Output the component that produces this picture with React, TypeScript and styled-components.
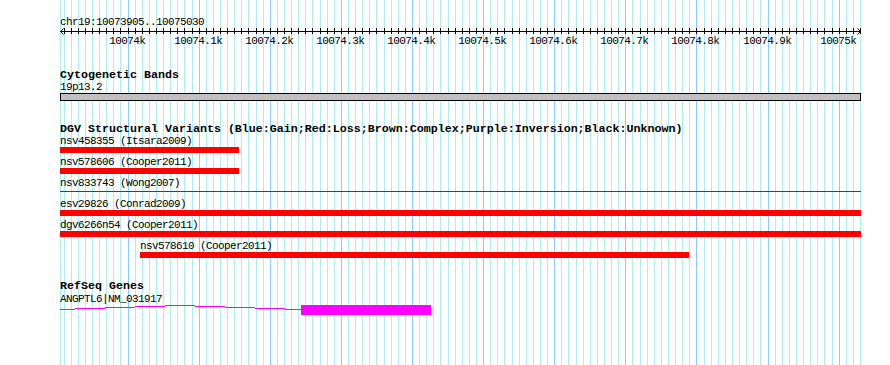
import React from "react";
import styled, { createGlobalStyle } from "styled-components";

const START = 10073905;
const END = 10075030;
const LEFT = 60;
const TRACK_W = 800;
const SCALE = TRACK_W / (END - START);
const W = 890;
const H = 365;
const FONT = '"Liberation Mono", "DejaVu Sans Mono", monospace';

const px = (bp: number) => LEFT + (bp - START) * SCALE;
const clampX = (bp: number) => Math.max(LEFT, Math.min(LEFT + TRACK_W + 1, Math.round(px(bp))));

const GlobalStyle = createGlobalStyle`
  html, body { margin: 0; padding: 0; background: #ffffff; }
  #root { width: ${W}px; height: ${H}px; }
`;

const Panel = styled.div`
  position: relative;
  width: ${W}px;
  height: ${H}px;
  overflow: hidden;
  background: #ffffff;
  font-family: ${FONT};
  color: #000000;
`;

const GridLayer = styled.svg`
  position: absolute;
  left: 0;
  top: 0;
  z-index: 0;
  display: block;
`;

const Content = styled.div`
  position: relative;
  z-index: 1;
  display: flex;
  flex-direction: column;
`;

const SmallText = styled.div`
  font-size: 11px;
  letter-spacing: -0.6px;
  line-height: 12px;
  height: 12px;
  white-space: nowrap;
`;

const RefLabel = styled(SmallText)`
  margin: 16px 0 0 ${LEFT}px;
`;

const RulerSvg = styled.svg`
  display: block;
  width: ${W}px;
  height: 20px;
`;

const Track = styled.section<{ $gap: number }>`
  display: flex;
  flex-direction: column;
  margin-top: ${(p) => p.$gap}px;
`;

const TrackTitle = styled.div`
  padding-left: ${LEFT}px;
  font-weight: bold;
  font-size: 11.67px;
  line-height: 11px;
  height: 11px;
  white-space: nowrap;
`;

const FeatureRow = styled.div`
  display: flex;
  flex-direction: column;
  margin-bottom: 3px;
`;

const FeatureLabel = styled(SmallText)``;

const Bar = styled.div<{ $thin?: boolean; $color: string }>`
  background: ${(p) => p.$color};
  height: ${(p) => (p.$thin ? 1 : 6)}px;
  margin: ${(p) => (p.$thin ? "2px 0 3px" : "0")};
`;

const TrackLabel = styled(SmallText)<{ $top?: number }>`
  padding-left: ${LEFT}px;
  margin-top: ${(p) => p.$top ?? 0}px;
`;

const Band = styled.div`
  box-sizing: border-box;
  margin-left: ${LEFT}px;
  width: ${TRACK_W + 1}px;
  height: 8px;
  border: 1px solid #000000;
  background: #c0c0c0;
`;

const GeneSvg = styled.svg`
  display: block;
  width: ${W}px;
  height: 10px;
`;

type Variant = { name: string; src: string; start: number; end: number; thin?: boolean };

const variants: Variant[] = [
  { name: "nsv458355", src: "Itsara2009", start: 10073800, end: 10074157 },
  { name: "nsv578606", src: "Cooper2011", start: 10073800, end: 10074157 },
  { name: "nsv833743", src: "Wong2007", start: 10073700, end: 10075200, thin: true },
  { name: "esv29826", src: "Conrad2009", start: 10073500, end: 10075400 },
  { name: "dgv6266n54", src: "Cooper2011", start: 10073600, end: 10075300 },
  { name: "nsv578610", src: "Cooper2011", start: 10074018, end: 10074790 },
];

const gridBps: number[] = [];
for (let bp = 10073910; bp <= END; bp += 10) gridBps.push(bp);

const majorLabel = (bp: number) => {
  const k = bp / 1000;
  const s = Number.isInteger(k) ? String(k) : k.toFixed(1);
  return `${s}k`;
};

function Grid() {
  const gw = LEFT + TRACK_W + 1;
  return (
    <GridLayer width={gw} height={H} viewBox={`0 0 ${gw} ${H}`} shapeRendering="crispEdges">
      <line x1={LEFT + 0.5} y1={0} x2={LEFT + 0.5} y2={H} stroke="#afeeee" />
      {gridBps.map((bp) => {
        const x = Math.round(px(bp)) + 0.5;
        const major = bp % 100 === 0;
        return (
          <line key={bp} x1={x} y1={0} x2={x} y2={H} stroke={major ? "#87cefa" : "#afeeee"} />
        );
      })}
    </GridLayer>
  );
}

function Ruler() {
  const right = LEFT + TRACK_W;
  return (
    <RulerSvg viewBox={`0 0 ${W} 20`}>
      <g shapeRendering="crispEdges" stroke="#000">
        <line x1={LEFT} y1={3.5} x2={right + 1} y2={3.5} />
        {gridBps.map((bp) => {
          const x = Math.round(px(bp)) + 0.5;
          return <line key={bp} x1={x} y1={0} x2={x} y2={6} />;
        })}
      </g>
      <g stroke="#000" fill="none">
        <polyline points={`${LEFT + 3.5},0.5 ${LEFT + 0.5},3.5 ${LEFT + 3.5},6.5`} />
        <polyline points={`${right - 2.5},0.5 ${right + 0.5},3.5 ${right - 2.5},6.5`} />
      </g>
      {gridBps
        .filter((bp) => bp % 100 === 0)
        .map((bp) => (
          <text
            key={bp}
            x={Math.round(px(bp)) - 0.7}
            y={16}
            textAnchor="middle"
            fontSize={11}
            letterSpacing={-0.6}
            fontFamily={FONT}
            fill="#000"
          >
            {majorLabel(bp)}
          </text>
        ))}
    </RulerSvg>
  );
}

function Gene() {
  const exonStart = 301;
  const exonEnd = 431;
  const top = 305;
  const steps = [
    [60, 75, 309],
    [75, 105, 308],
    [105, 135, 307],
    [135, 165, 306],
    [165, 195, 305],
    [195, 225, 306],
    [225, 255, 307],
    [255, 285, 308],
    [285, exonStart, 309],
  ];
  return (
    <GeneSvg viewBox={`0 0 ${W} 10`} shapeRendering="crispEdges">
      {steps.map(([a, b, y]) => (
        <line key={a} x1={a} y1={y - top + 0.5} x2={b} y2={y - top + 0.5} stroke="#ff00ff" />
      ))}
      <rect x={exonStart} y={0} width={exonEnd - exonStart} height={10} fill="#ff00ff" />
    </GeneSvg>
  );
}

export default function App() {
  return (
    <Panel>
      <GlobalStyle />
      <Grid />
      <Content>
        <RefLabel>chr19:{START}..{END}</RefLabel>
        <Ruler />

        <Track $gap={22}>
          <TrackTitle>Cytogenetic Bands</TrackTitle>
          <TrackLabel>19p13.2</TrackLabel>
          <Band />
        </Track>

        <Track $gap={23}>
          <TrackTitle>
            DGV Structural Variants (Blue:Gain;Red:Loss;Brown:Complex;Purple:Inversion;Black:Unknown)
          </TrackTitle>
          {variants.map((v) => {
            const x1 = clampX(v.start);
            const x2 = clampX(v.end);
            return (
              <FeatureRow key={v.name}>
                <FeatureLabel style={{ marginLeft: x1 }}>
                  {v.name} ({v.src})
                </FeatureLabel>
                <Bar
                  $thin={v.thin}
                  $color={v.thin ? "#e00000" : "#ff0000"}
                  style={{ marginLeft: x1, width: x2 - x1 }}
                />
              </FeatureRow>
            );
          })}
        </Track>

        <Track $gap={20}>
          <TrackTitle>RefSeq Genes</TrackTitle>
          <TrackLabel $top={1}>ANGPTL6|NM_031917</TrackLabel>
          <Gene />
        </Track>
      </Content>
    </Panel>
  );
}
